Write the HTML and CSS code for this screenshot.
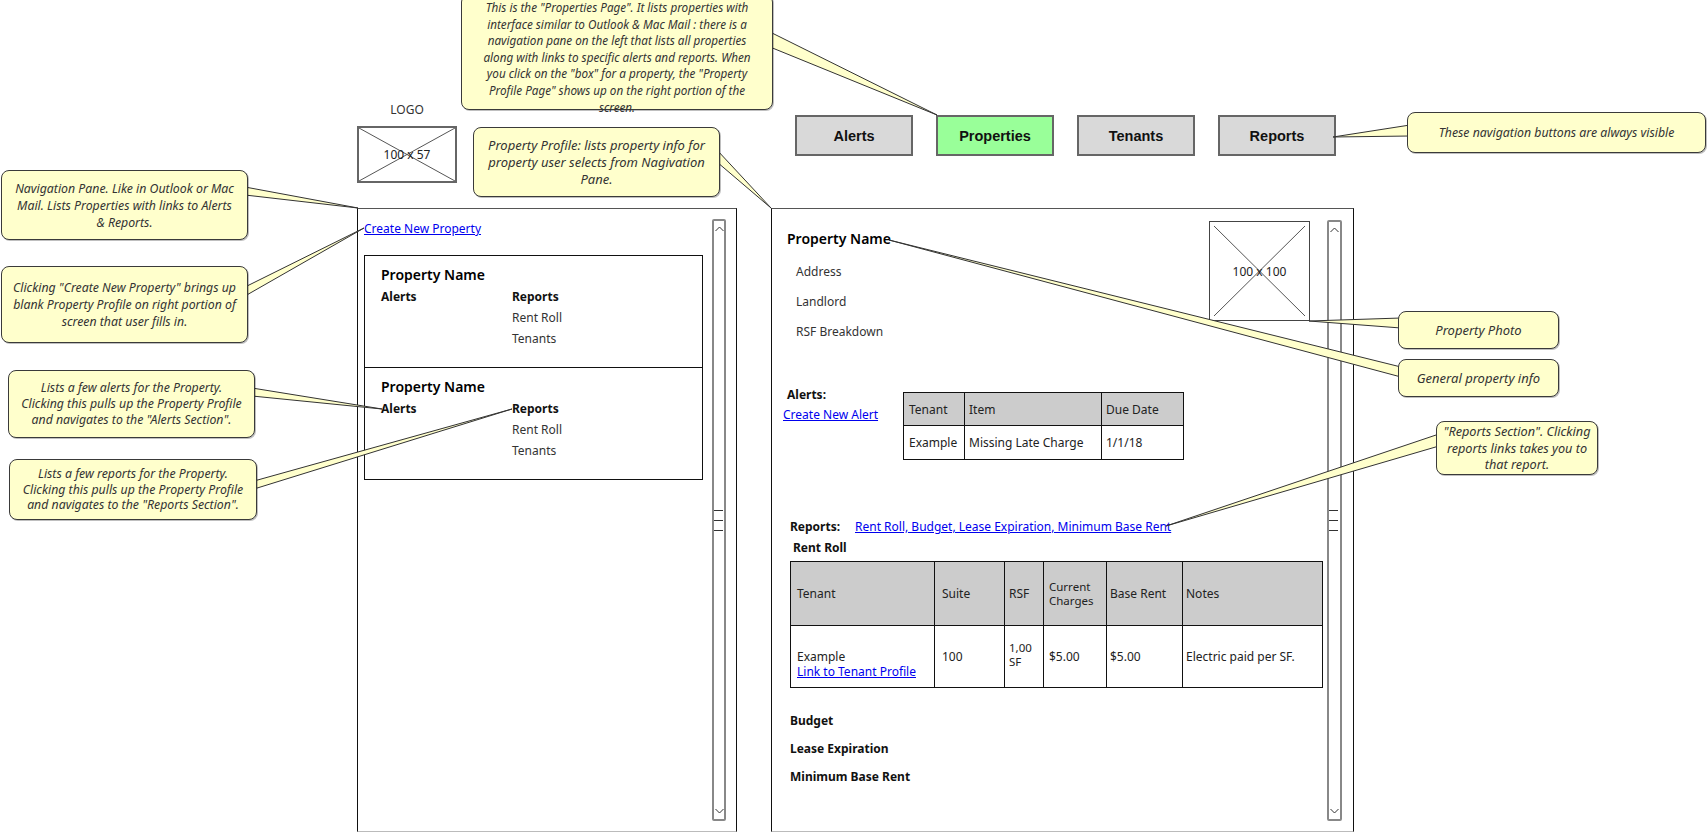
FILE: index.html
```html
<!DOCTYPE html>
<html lang="en">
<head>
<meta charset="utf-8">
<title>Properties Page Wireframe</title>
<link rel="stylesheet" href="styles.css">
</head>
<body>
<div class="canvas">
  <header class="topbar">
    <div class="logo">
      <div class="logo-label">LOGO</div>
      <div class="ph logo-box">
        <svg viewBox="0 0 96 53" preserveAspectRatio="none"><line x1="0" y1="0" x2="96" y2="53"/><line x1="96" y1="0" x2="0" y2="53"/></svg>
        <span>100 x 57</span>
      </div>
    </div>
    <nav class="nav">
      <div class="nav-btn">Alerts</div>
      <div class="nav-btn active">Properties</div>
      <div class="nav-btn">Tenants</div>
      <div class="nav-btn">Reports</div>
    </nav>
  </header>

  <main class="panes">
    <section class="pane nav-pane">
      <div class="nav-list">
        <a class="link" href="#">Create New Property</a>
        <div class="cards">
          <div class="card">
            <div class="card-title">Property Name</div>
            <div class="card-cols">
              <div class="card-col col-alerts"><span class="lbl">Alerts</span></div>
              <div class="card-col"><span class="lbl">Reports</span><span>Rent Roll</span><span>Tenants</span></div>
            </div>
          </div>
          <div class="card">
            <div class="card-title">Property Name</div>
            <div class="card-cols">
              <div class="card-col col-alerts"><span class="lbl">Alerts</span></div>
              <div class="card-col"><span class="lbl">Reports</span><span>Rent Roll</span><span>Tenants</span></div>
            </div>
          </div>
        </div>
      </div>
      <div class="scroll">
        <svg class="chev" width="9" height="6" viewBox="0 0 9 6"><path d="M0.5 5 L4.5 1 L8.5 5"/></svg>
        <div class="grip"><i></i><i></i><i></i></div>
        <svg class="chev" width="9" height="6" viewBox="0 0 9 6"><path d="M0.5 1 L4.5 5 L8.5 1"/></svg>
      </div>
    </section>

    <section class="pane profile-pane">
      <div class="profile">
        <div class="profile-top">
          <div class="info">
            <div class="info-title">Property Name</div>
            <div class="info-list">
              <span>Address</span>
              <span>Landlord</span>
              <span>RSF Breakdown</span>
            </div>
          </div>
          <div class="ph photo">
            <svg viewBox="0 0 99 98" preserveAspectRatio="none"><line x1="4" y1="4" x2="95" y2="94"/><line x1="95" y1="4" x2="4" y2="94"/></svg>
            <span>100 x 100</span>
          </div>
        </div>

        <div class="alerts-row">
          <div class="alerts-side">
            <span class="lbl">Alerts:</span>
            <a class="link" href="#">Create New Alert</a>
          </div>
          <table class="grid alerts-table">
            <colgroup><col style="width:61px"><col style="width:137px"><col style="width:82px"></colgroup>
            <tr class="head"><th>Tenant</th><th>Item</th><th>Due Date</th></tr>
            <tr class="body"><td>Example</td><td>Missing Late Charge</td><td>1/1/18</td></tr>
          </table>
        </div>

        <div class="reports-row">
          <span class="lbl reports-lbl">Reports:</span>
          <a class="link" href="#">Rent Roll, Budget, Lease Expiration, Minimum Base Rent</a>
        </div>
        <div class="lbl rr-title">Rent Roll</div>
        <table class="grid rr-table">
          <colgroup><col style="width:144px"><col style="width:70px"><col style="width:39px"><col style="width:63px"><col style="width:76px"><col style="width:140px"></colgroup>
          <tr class="head"><th>Tenant</th><th>Suite</th><th>RSF</th><th class="two">Current<br>Charges</th><th>Base Rent</th><th>Notes</th></tr>
          <tr class="body"><td class="ten">Example<br><a class="link" href="#">Link to Tenant Profile</a></td><td>100</td><td class="two rsf">1,00<br>SF</td><td>$5.00</td><td>$5.00</td><td>Electric paid per SF.</td></tr>
        </table>
        <div class="report-list">
          <span class="lbl">Budget</span>
          <span class="lbl">Lease Expiration</span>
          <span class="lbl">Minimum Base Rent</span>
        </div>
      </div>
      <div class="scroll scroll-r">
        <svg class="chev" width="9" height="6" viewBox="0 0 9 6"><path d="M0.5 5 L4.5 1 L8.5 5"/></svg>
        <div class="grip"><i></i><i></i><i></i></div>
        <svg class="chev" width="9" height="6" viewBox="0 0 9 6"><path d="M0.5 1 L4.5 5 L8.5 1"/></svg>
      </div>
    </section>
  </main>

  <svg class="tails" width="1708" height="832" viewBox="0 0 1708 832">
    <polygon points="770,32 937,115 770,47"/>
    <polygon points="1410,125 1333,137 1410,136"/>
    <polygon points="245,187 358,208 245,195"/>
    <polygon points="245,287 364,228 245,296"/>
    <polygon points="252,388 382,409 252,396"/>
    <polygon points="254,481 512,409 254,489"/>
    <polygon points="717,150 771,208 717,162"/>
    <polygon points="1401,318 1309,321 1401,328"/>
    <polygon points="1401,367 889,240 1401,377"/>
    <polygon points="1439,434 1166,526 1439,446"/>
  </svg>

  <div class="note n-top">This is the "Properties Page". It lists properties with<br>interface similar to Outlook &amp; Mac Mail : there is a<br>navigation pane on the left that lists all properties<br>along with links to specific alerts and reports. When<br>you click on the "box" for a property, the "Property<br>Profile Page" shows up on the right portion of the<br>screen.</div>
  <div class="note n-nav">Navigation Pane. Like in Outlook or Mac<br>Mail. Lists Properties with links to Alerts<br>&amp; Reports.</div>
  <div class="note n-create">Clicking "Create New Property" brings up<br>blank Property Profile on right portion of<br>screen that user fills in.</div>
  <div class="note n-alerts">Lists a few alerts for the Property.<br>Clicking this pulls up the Property Profile<br>and navigates to the "Alerts Section".</div>
  <div class="note n-reports">Lists a few reports for the Property.<br>Clicking this pulls up the Property Profile<br>and navigates to the "Reports Section".</div>
  <div class="note n-profile">Property Profile: lists property info for<br>property user selects from Nagivation<br>Pane.</div>
  <div class="note n-buttons">These navigation buttons are always visible</div>
  <div class="note n-photo">Property Photo</div>
  <div class="note n-general">General property info</div>
  <div class="note n-section">"Reports Section". Clicking<br>reports links takes you to<br>that report.</div>
</div>
</body>
</html>
```

FILE: styles.css
```css
* { box-sizing: border-box; }
html, body { margin: 0; padding: 0; background: #fff; }
body {
  font-family: "Noto Sans", "DejaVu Sans", sans-serif;
  font-size: 12px;
  color: #111;
}
.canvas { position: relative; width: 1708px; height: 832px; overflow: hidden; }

/* header */
.topbar { display: flex; height: 208px; padding-left: 357px; }
.logo { width: 100px; margin-top: 102px; }
.logo-label { height: 16px; line-height: 16px; margin-bottom: 8px; text-align: center; font-size: 12px; color: #333; }
.ph { position: relative; border: 2px solid #666; display: flex; align-items: center; justify-content: center; }
.ph svg { position: absolute; left: 0; top: 0; width: 100%; height: 100%; }
.ph svg line { stroke: #555; stroke-width: 1; }
.ph span { position: relative; font-size: 12px; color: #222; }
.logo-box { width: 100px; height: 57px; }

.nav { display: flex; gap: 23px; margin-left: 338px; margin-top: 115px; align-self: flex-start; }
.nav-btn {
  width: 118px; height: 41px;
  border: 2px solid #666; background: #d9d9d9;
  display: flex; align-items: center; justify-content: center;
  font-family: "Liberation Sans Narrow", "Liberation Sans", sans-serif;
  font-weight: bold; font-size: 14.5px; color: #111;
}
.nav-btn.active { background: #99ff99; }

/* panes */
.panes { display: flex; gap: 34px; padding-left: 357px; }
.pane { height: 624px; border: 1px solid #111; border-top-color: #555; border-bottom-color: #bbb; display: flex; }
.nav-pane { width: 380px; }
.profile-pane { width: 583px; }

.link { color: #0000ee; text-decoration: underline; line-height: 16px; }
.lbl { font-weight: bold; }

.nav-list { width: 339px; margin-left: 6px; padding-top: 12px; display: flex; flex-direction: column; align-items: flex-start; }
.cards { width: 339px; margin-top: 18px; }
.card { height: 113px; border: 1px solid #111; padding: 9px 0 0 16px; }
.card + .card { margin-top: -1px; }
.card-title { font-size: 14px; line-height: 20px; color: #000; font-weight: 600; }
.card-cols { display: flex; margin-top: 1px; }
.card-col { display: flex; flex-direction: column; line-height: 21px; color: #333; }
.card-col .lbl { color: #111; }
.col-alerts { width: 131px; }

.scroll {
  width: 14px; margin: 10px 10px 10px 9px;
  border: 2px solid #888; border-radius: 2px;
  display: flex; flex-direction: column; justify-content: space-between; align-items: center;
  padding: 5px 0 5px;
  flex: none;
}
.scroll-r { width: 15px; margin: 11px 12px 10px 0; }
.chev path { fill: none; stroke: #333; stroke-width: 1; }
.grip { display: flex; flex-direction: column; gap: 9px; align-items: flex-start; width: 100%; }
.grip i { display: block; width: 9px; height: 1px; background: #333; }

/* profile */
.profile { flex: 1; padding: 12px 4px 0 15px; }
.profile-top { display: flex; justify-content: space-between; align-items: flex-start; }
.info { padding-top: 8px; }
.info-title { font-size: 14px; line-height: 20px; color: #000; font-weight: 600; }
.info-list { display: flex; flex-direction: column; gap: 10px; padding-left: 9px; margin-top: 13px; line-height: 20px; color: #333; }
.photo { width: 101px; height: 100px; margin-right: 13px; border: 1px solid #444; }

.alerts-row { display: flex; margin-top: 45px; }
.alerts-side { width: 116px; display: flex; flex-direction: column; align-items: flex-start; line-height: 16px; }
.alerts-side .link { margin-left: -4px; margin-top: 4px; }
.alerts-table { margin-top: 5px; }

table.grid { border-collapse: collapse; table-layout: fixed; }
.grid th, .grid td { border: 1px solid #111; text-align: left; font-weight: normal; padding: 0 0 0 4px; color: #222; white-space: nowrap; }
.grid tr.head { background: #cccccc; }
.alerts-table { width: 280px; }
.alerts-table tr.head { height: 33px; }
.alerts-table tr.body { height: 34px; }
.alerts-table td:first-child, .alerts-table th:first-child { padding-left: 5px; }

.reports-row { display: flex; margin-top: 59px; padding-left: 3px; line-height: 16px; }
.reports-lbl { width: 65px; }
.rr-title { margin-top: 5px; padding-left: 6px; line-height: 16px; }
.rr-table { width: 532px; margin: 5px 0 0 3px; }
.rr-table tr.head { height: 64px; }
.rr-table tr.body { height: 62px; }
.rr-table td { vertical-align: top; padding-top: 23px; line-height: 15px; }
.rr-table th.two { line-height: 14px; font-size: 11.5px; }
.rr-table td.ten { padding-top: 23px; }
.rr-table td.rsf { padding-top: 15px; line-height: 14px; font-size: 11.5px; }
.rr-table th:nth-child(1), .rr-table td:nth-child(1) { padding-left: 6px; }
.rr-table th:nth-child(2), .rr-table td:nth-child(2) { padding-left: 7px; }
.rr-table th:nth-child(3), .rr-table td:nth-child(3) { padding-left: 4px; }
.rr-table th:nth-child(4), .rr-table td:nth-child(4) { padding-left: 5px; }
.rr-table th:nth-child(5), .rr-table td:nth-child(5) { padding-left: 3px; }
.rr-table th:nth-child(6), .rr-table td:nth-child(6) { padding-left: 3px; }

.report-list { display: flex; flex-direction: column; gap: 12px; margin-top: 25px; padding-left: 3px; line-height: 16px; }

/* annotations */
.tails { position: absolute; left: 0; top: 0; z-index: 1; pointer-events: none; }
.tails polygon { fill: #ffffcc; stroke: #333; stroke-width: 1; stroke-linejoin: round; }
.note {
  position: absolute; z-index: 2;
  background: #ffffcc; border: 1.5px solid #3a3a3a; border-radius: 8px;
  box-shadow: 1px 1px 0 rgba(0, 0, 0, 0.25);
  font-style: italic; font-size: 12.3px; line-height: 17px; color: #333;
  text-align: center; white-space: nowrap;
  display: flex; flex-direction: column; justify-content: center; align-items: center;
}
.n-top { left: 461px; top: -6px; width: 312px; height: 116px; justify-content: flex-start; padding-top: 4px; line-height: 16.6px; font-size: 11.7px; }
.n-nav { left: 1px; top: 170px; width: 247px; height: 70px; }
.n-create { left: 1px; top: 266px; width: 247px; height: 77px; }
.n-alerts { left: 8px; top: 370px; width: 247px; height: 68px; line-height: 16px; }
.n-reports { left: 9px; top: 459px; width: 248px; height: 61px; line-height: 15.5px; }
.n-profile { left: 473px; top: 127px; width: 247px; height: 70px; font-size: 13px; }
.n-buttons { left: 1407px; top: 112px; width: 299px; height: 41px; font-size: 12.3px; }
.n-photo { left: 1398px; top: 311px; width: 161px; height: 38px; font-size: 13px; }
.n-general { left: 1398px; top: 359px; width: 161px; height: 38px; font-size: 13px; }
.n-section { left: 1436px; top: 421px; width: 162px; height: 54px; line-height: 16.5px; font-size: 12.7px; }
```
